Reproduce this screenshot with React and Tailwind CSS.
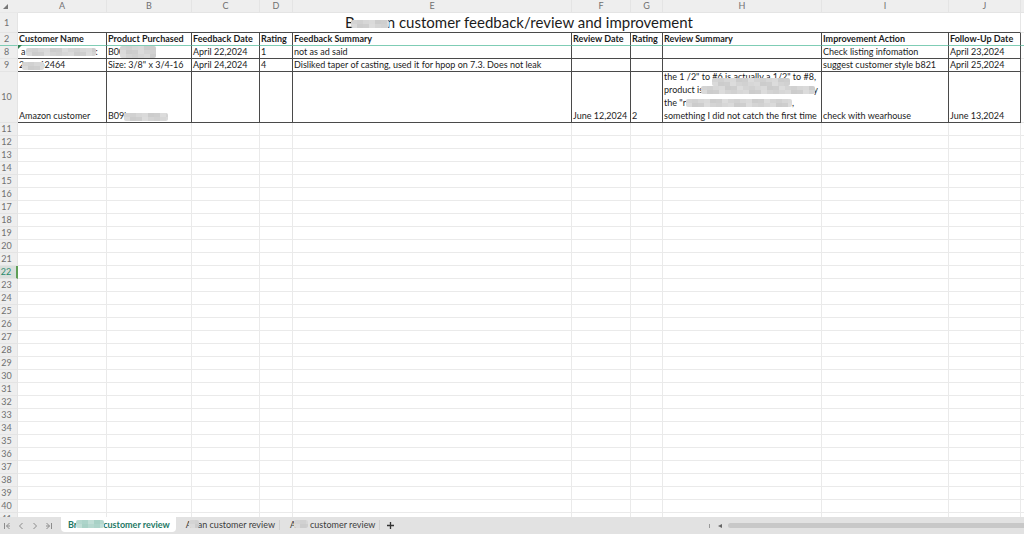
import React, { useState } from 'react';

const columns = ['A', 'B', 'C', 'D', 'E', 'F', 'G', 'H', 'I', 'J'];

const columnWidths = [
  'w-[18px]',
  'w-[89px]',
  'w-[85px]',
  'w-[68px]',
  'w-[33px]',
  'w-[279px]',
  'w-[59px]',
  'w-[32px]',
  'w-[159px]',
  'w-[127px]',
  'w-[72px]',
];

const headings = [
  'Customer Name',
  'Product Purchased',
  'Feedback Date',
  'Rating',
  'Feedback Summary',
  'Review Date',
  'Rating',
  'Review Summary',
  'Improvement Action',
  'Follow-Up Date',
];

const emptyRows = Array.from({ length: 31 }, (_, i) => i + 11);

const greys = ['#d4d4d4', '#cecece', '#dadada', '#d1d1d1', '#dcdcdc', '#cccccc', '#d7d7d7'];
const greens = ['#b5d8cf', '#a8d1c6', '#c0ded6', '#add4ca'];

// pixelated patch that hides private text
const Mosaic = ({ width, height, className, colors = greys }) => {
  const cells = [];
  for (let y = 0; y < height; y += 4) {
    for (let x = 0; x < width; x += 6) {
      cells.push(
        <rect key={`${x}-${y}`} x={x} y={y} width="6" height="4" fill={colors[(x / 6 * 3 + y / 4 * 2) % colors.length]} />
      );
    }
  }
  return (
    <svg width={width} height={height} className={`absolute rounded-xs ${className}`} shapeRendering="crispEdges" aria-hidden="true">
      {cells}
    </svg>
  );
};

const RowHeader = ({ children, active }) => (
  <th
    scope="row"
    className={
      active
        ? 'border-b border-r-2 border-b-[#e4e4e4] border-r-[#5f9f56] bg-[#d9dfdc] p-0 pr-1 text-center align-middle font-normal text-[#2a8a6c]'
        : 'border-b border-r border-b-[#e4e4e4] border-r-[#e4e4e4] bg-[#eeeeee] p-0 pr-1 text-center align-middle font-normal text-[#707070]'
    }
  >
    {children}
  </th>
);

const Cell = ({ children, className = '' }) => (
  <td className="border-r border-b border-[#4a4a4a] p-0 pl-px align-bottom whitespace-nowrap">
    <div className={`relative ${className}`}>{children}</div>
  </td>
);

const Spare = () => <td className="border-b border-[#eaeaea] p-0"></td>;

const NavButton = ({ label, path }) => (
  <button type="button" aria-label={label} className="flex h-3 w-3 items-center justify-center">
    <svg width="8" height="8" viewBox="0 0 8 8" fill="none" stroke="#8c8c8c" strokeWidth="1">
      <path d={path} />
    </svg>
  </button>
);

const App = () => {
  const [tab, setTab] = useState(0);

  const tabClass = (i) =>
    i === tab
      ? 'h-[15px] rounded-b bg-white pr-[6px] pl-[7px] font-bold text-[#1d7864]'
      : 'h-[15px] pr-1 pl-[10px] text-[#3c3c3c]';

  return (
    <div className="flex h-screen flex-col overflow-hidden bg-white font-['Lato','Open_Sans',sans-serif] text-[9px] leading-[12px] text-[#1c1c1c]">
      <main className="min-h-0 flex-1 overflow-hidden">
        <table className="w-full table-fixed border-separate border-spacing-0">
          <colgroup>
            {columnWidths.map((w, i) => (
              <col key={i} className={w} />
            ))}
            <col />
          </colgroup>
          <thead>
            <tr className="h-[13px] bg-[#eeeeee] text-[#707070]">
              <th className="border-b border-[#e8e8e8] p-0" aria-label="Select all">
                <svg width="5" height="5" viewBox="0 0 5 5" className="ml-[3px]">
                  <path d="M5 0V5H0Z" fill="#777777" />
                </svg>
              </th>
              {columns.map((c) => (
                <th key={c} scope="col" className="border-r border-b border-[#e4e4e4] p-0 font-normal">
                  {c}
                </th>
              ))}
              <th className="border-b border-[#e4e4e4] p-0"></th>
            </tr>
          </thead>
          <tbody>
            <tr className="h-[20px]">
              <RowHeader>1</RowHeader>
              <td colSpan={10} className="border-r border-b border-r-[#e6e6e6] border-b-[#4a4a4a] p-0 text-center align-middle">
                <div className="relative text-[15px] leading-[19px]">
                  <span>B</span>
                  <span className="relative inline-block h-2 w-[32px]">
                    <Mosaic width={38} height={8} className="top-0 -left-1" />
                  </span>
                  <span>n customer feedback/review and improvement</span>
                </div>
              </td>
              <Spare />
            </tr>
            <tr className="h-[13px]">
              <th scope="row" className="border-r border-b border-r-[#e4e4e4] border-b-[#7fcdb5] bg-[#eeeeee] p-0 pr-1 font-normal text-[#707070]">2</th>
              {headings.map((h, i) => (
                <th key={i} scope="col" className="border-r border-b border-r-[#4a4a4a] border-b-[#7fcdb5] p-0 pl-px text-left font-bold whitespace-nowrap">
                  {h}
                </th>
              ))}
              <td className="border-b border-[#7fcdb5] p-0"></td>
            </tr>
            <tr className="h-[13px]">
              <RowHeader>8</RowHeader>
              <Cell>
                <span className="pl-[2px]">a</span>
                <span className="inline-block w-[70px]"></span>:
                <Mosaic width={70} height={8} className="top-[2px] left-[7px]" />
                <svg width="4" height="4" className="absolute -top-px -left-px" aria-hidden="true">
                  <path d="M0 0H4L0 4Z" fill="#2e7d4f" />
                </svg>
              </Cell>
              <Cell>
                B00
                <Mosaic width={36} height={12} className="top-0 left-[12px]" />
              </Cell>
              <Cell>April 22,2024</Cell>
              <Cell>1</Cell>
              <Cell>not as ad said</Cell>
              <Cell />
              <Cell />
              <Cell />
              <Cell>Check listing infomation</Cell>
              <Cell>April 23,2024</Cell>
              <Spare />
            </tr>
            <tr className="h-[13px]">
              <RowHeader>9</RowHeader>
              <Cell>
                2<span className="inline-block w-[15px]"></span>62464
                <Mosaic width={22} height={8} className="top-[3px] left-[3px]" />
              </Cell>
              <Cell>Size: 3/8" x 3/4-16</Cell>
              <Cell>April 24,2024</Cell>
              <Cell>4</Cell>
              <Cell>Disliked taper of casting, used it for hpop on 7.3. Does not leak</Cell>
              <Cell />
              <Cell />
              <Cell />
              <Cell>suggest customer style b821</Cell>
              <Cell>April 25,2024</Cell>
              <Spare />
            </tr>
            <tr className="h-[51px]">
              <RowHeader>10</RowHeader>
              <Cell>Amazon customer</Cell>
              <Cell>
                B09'
                <Mosaic width={44} height={8} className="top-[3px] left-[16px]" />
              </Cell>
              <Cell />
              <Cell />
              <Cell />
              <Cell>June 12,2024</Cell>
              <Cell>2</Cell>
              <Cell className="-mt-1 leading-[13px]">
                the 1 /2" to #6 is actually a 1/2" to #8,
                <br />
                product is
                <span className="inline-block w-[110px]"></span>y
                <br />
                the "r<span className="inline-block w-[106px]"></span>,
                <br />
                something I did not catch the first time
                <Mosaic width={78} height={8} className="top-[8px] left-[48px]" />
                <Mosaic width={114} height={8} className="top-[16px] left-[37px]" />
                <Mosaic width={106} height={8} className="top-[29px] left-[22px]" />
              </Cell>
              <Cell>check with wearhouse</Cell>
              <Cell>June 13,2024</Cell>
              <Spare />
            </tr>
            {emptyRows.map((n) => (
              <tr key={n} className="h-[13px]">
                <RowHeader active={n === 22}>{n}</RowHeader>
                {columns.map((c) => (
                  <td key={c} className="border-r border-b border-[#eaeaea] p-0"></td>
                ))}
                <Spare />
              </tr>
            ))}
          </tbody>
        </table>
      </main>
      <footer className="flex h-[17px] shrink-0 items-start bg-[#e2e2e2]">
        <div className="flex w-[61px] items-center gap-[2px] pt-[3px] pl-px">
          <NavButton label="First sheet" path="M1.5 1V7M6.5 1L3.5 4L6.5 7M3.5 4H7" />
          <NavButton label="Previous sheet" path="M5.5 1L2.5 4L5.5 7" />
          <NavButton label="Next sheet" path="M2.5 1L5.5 4L2.5 7" />
          <NavButton label="Last sheet" path="M6.5 1V7M1.5 1L4.5 4L1.5 7M1 4H4.5" />
        </div>
        <button type="button" className={tabClass(0)} onClick={() => setTab(0)}>
          Br
          <span className="relative inline-block h-2 w-[26px]">
            <Mosaic width={28} height={8} className="top-0 -left-px" colors={greens} />
          </span>
          customer review
        </button>
        <button type="button" className={tabClass(1)} onClick={() => setTab(1)}>
          A
          <span className="relative inline-block h-2 w-[6px]">
            <Mosaic width={10} height={8} className="top-0 -left-[3px]" />
          </span>
          an customer review
        </button>
        <span className="mt-[3px] h-[10px] w-px bg-[#d0d0d0]"></span>
        <button type="button" className={tabClass(2)} onClick={() => setTab(2)}>
          A
          <span className="relative inline-block h-2 w-[14px]">
            <Mosaic width={14} height={8} className="top-0 -left-[2px]" />
          </span>
          customer review
        </button>
        <span className="mt-[3px] h-[10px] w-px bg-[#d0d0d0]"></span>
        <button type="button" aria-label="Add sheet" className="flex h-[17px] w-5 items-center justify-center">
          <svg width="7" height="7" viewBox="0 0 7 7" stroke="#333333" strokeWidth="1.3">
            <path d="M3.5 0V7M0 3.5H7" />
          </svg>
        </button>
        <div className="ml-auto flex h-[17px] w-[315px] items-center">
          <span className="h-1 w-px bg-[#999999]"></span>
          <button type="button" aria-label="Scroll left" className="ml-2 h-2 w-[6px]">
            <svg width="4" height="4" viewBox="0 0 4 4">
              <path d="M4 0V4L0 2Z" fill="#666666" />
            </svg>
          </button>
          <span className="ml-1 h-[5px] flex-1 rounded-l-full bg-[#c8c8c8]"></span>
        </div>
      </footer>
    </div>
  );
};

export default App;
